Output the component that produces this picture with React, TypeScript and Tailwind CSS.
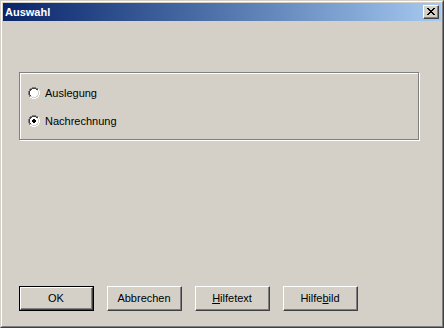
import React from "react";

const font = { fontFamily: '"Liberation Sans", Arial, sans-serif' };

const Radio = ({ checked }: { checked?: boolean }) => (
  <svg width="12" height="12" viewBox="0 0 12 12" shapeRendering="crispEdges">
    {/* outer dark-gray top-left arc */}
    <path fill="#808080" d="M4 0h4v1H4zM2 1h2v1H2zM8 1h2v1H8zM1 2h1v2H1zM0 4h1v4H0zM1 8h1v2H1z" />
    {/* inner black top-left arc */}
    <path fill="#404040" d="M4 1h4v1H4zM2 2h2v1H2zM8 2h2v1H8zM2 3h1v1H2zM1 4h1v4H1zM2 8h1v1H2z" />
    {/* outer white bottom-right */}
    <path fill="#ffffff" d="M10 2h1v2h-1zM11 4h1v4h-1zM10 8h1v2h-1zM8 10h2v1H8zM2 10h2v1H2zM4 11h4v1H4z" />
    {/* inner light bottom-right */}
    <path fill="#d4d0c8" d="M9 3h1v1H9zM10 4h1v4h-1zM9 8h1v1H9zM8 9h2v1H8zM2 9h2v1H2zM4 10h4v1H4z" />
    {/* white fill */}
    <path fill="#ffffff" d="M4 2h4v1H4zM3 3h6v1H3zM2 4h8v4H2zM3 8h6v1H3zM4 9h4v1H4z" />
    {checked && <path fill="#000000" d="M5 4h2v1H5zM4 5h4v2H4zM5 7h2v1H5z" />}
  </svg>
);

const Button = ({ children, isDefault }: { children: React.ReactNode; isDefault?: boolean }) => (
  <div className={`w-[75px] h-[25px] ${isDefault ? "border border-black" : ""}`}>
    <div className="w-full h-full border-t border-l border-white border-r border-b border-r-[#404040] border-b-[#404040]">
      <div className="w-full h-full border-r border-b border-r-[#808080] border-b-[#808080] flex items-center justify-center text-[11px] text-black">
        {children}
      </div>
    </div>
  </div>
);

export default function App() {
  return (
    <div style={font} className="w-[444px] h-[328px] bg-[#d4d0c8] border-t border-l border-[#d4d0c8] border-r border-b border-r-[#404040] border-b-[#404040]">
      <div className="w-full h-full border-t border-l border-white border-r border-b border-r-[#808080] border-b-[#808080] p-px flex flex-col">
        {/* title bar */}
        <div className="h-[18px] flex items-center justify-between pl-[2px] pr-[2px] bg-gradient-to-r from-[#0a246a] to-[#a6caf0]">
          <span className="text-white font-bold text-[11px] leading-none">Auswahl</span>
          <div className="w-[16px] h-[14px] bg-[#d4d0c8] border-t border-l border-white border-r border-b border-r-[#404040] border-b-[#404040]">
            <div className="w-full h-full border-r border-b border-r-[#808080] border-b-[#808080] flex items-center justify-center">
              <svg width="8" height="7" viewBox="0 0 8 7" shapeRendering="crispEdges">
                <path fill="#000" d="M0 0h2v1H0zM6 0h2v1H6zM1 1h2v1H1zM5 1h2v1H5zM2 2h4v1H2zM3 3h2v1H3zM2 4h4v1H2zM1 5h2v1H1zM5 5h2v1H5zM0 6h2v1H0zM6 6h2v1H6z" />
              </svg>
            </div>
          </div>
        </div>

        {/* client area */}
        <div className="flex-1 flex flex-col pl-[16px] pr-[21px]">
          <div className="mt-[51px] h-[68px] w-[400px] border border-[#808080] shadow-[1px_1px_0_0_#ffffff]">
            <div className="w-full h-full border-t border-l border-white pl-[7px] pt-[13px] flex flex-col gap-[16px] text-[11px] text-black">
              <div className="flex items-center h-[12px]">
                <Radio />
                <span className="ml-[5px]">Auslegung</span>
              </div>
              <div className="flex items-center h-[12px]">
                <Radio checked />
                <span className="ml-[5px]">Nachrechnung</span>
              </div>
            </div>
          </div>

          <div className="mt-auto mb-[14px] flex gap-[13px]">
            <Button isDefault>OK</Button>
            <Button>Abbrechen</Button>
            <Button>
              <span><span className="underline">H</span>ilfetext</span>
            </Button>
            <Button>
              <span>Hilfe<span className="underline">b</span>ild</span>
            </Button>
          </div>
        </div>
      </div>
    </div>
  );
}
